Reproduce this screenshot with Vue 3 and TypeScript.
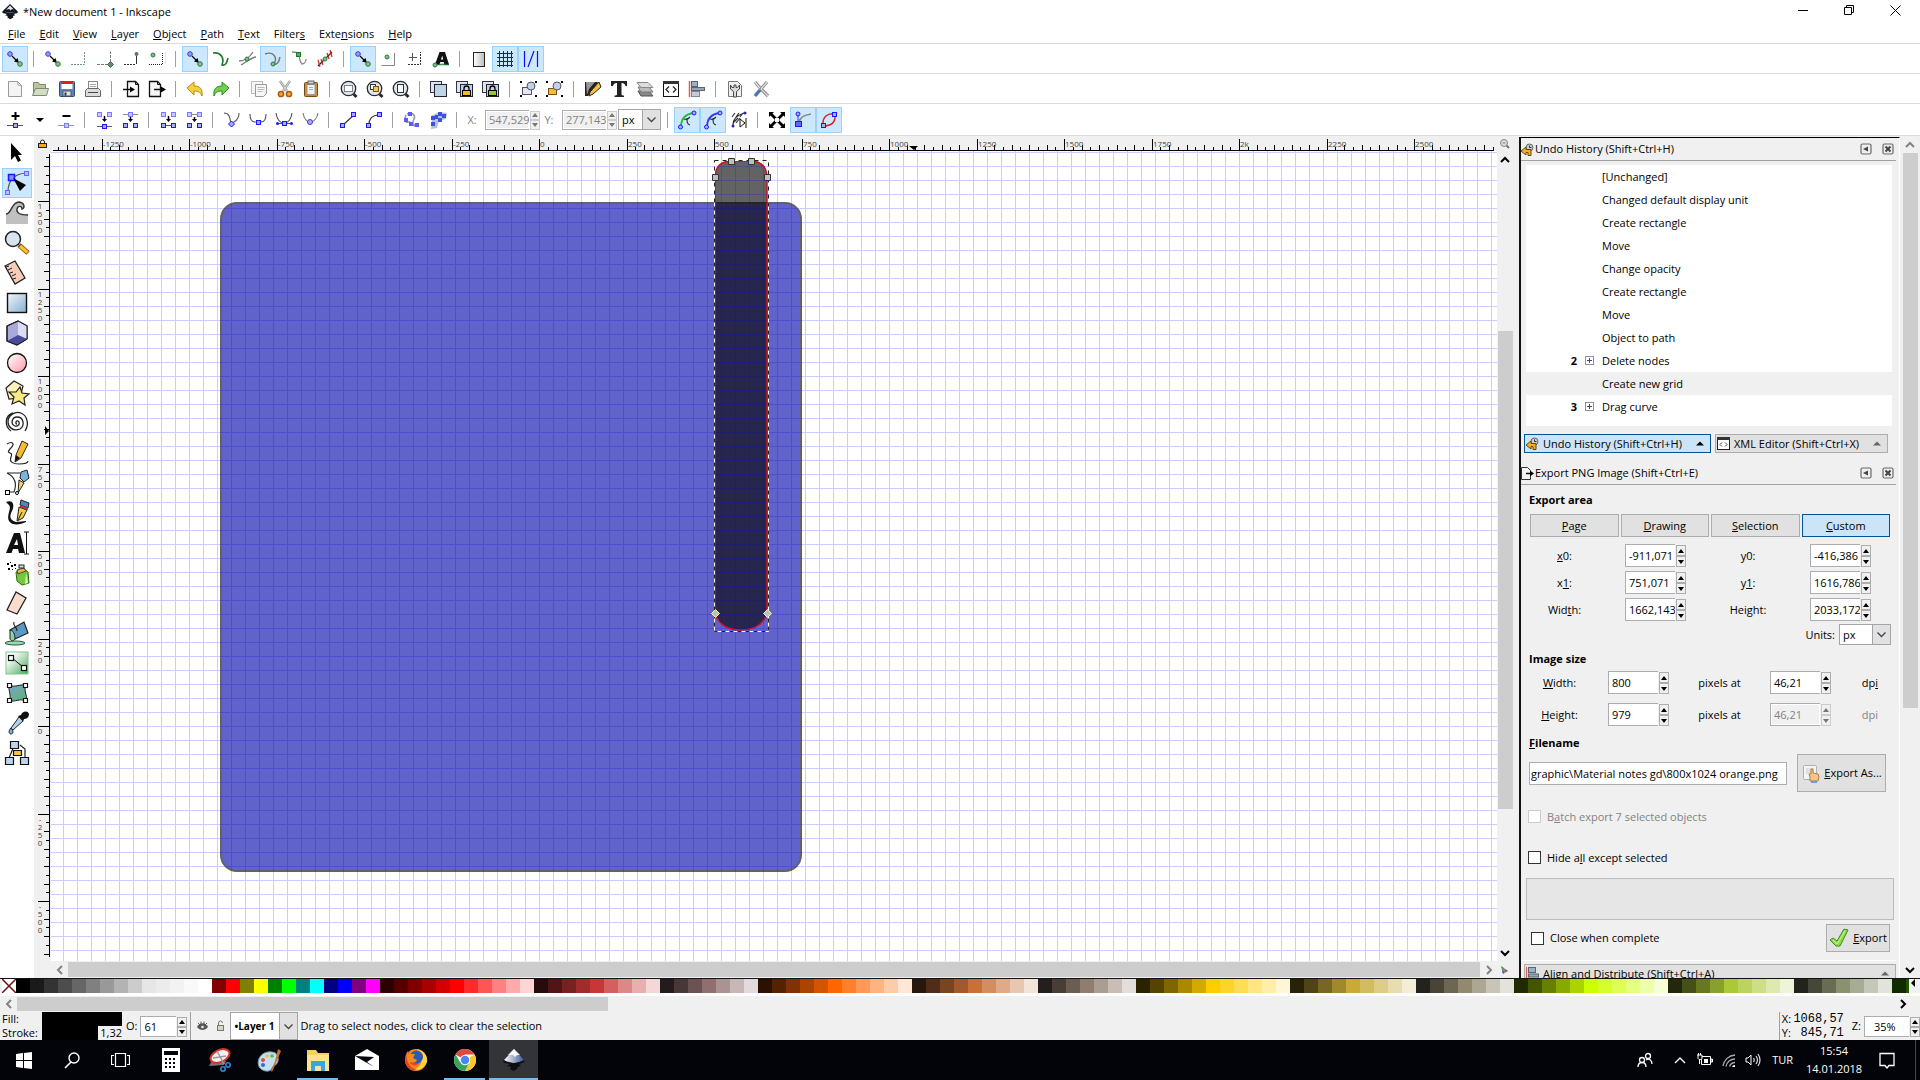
<script setup lang="ts">
import { h, ref } from 'vue'

/* ---------- small building blocks ---------- */

// Label with an underlined access key: the letter after "_" is the mnemonic.
const Key = (p: { t: string }) => {
  const i = p.t.indexOf('_')
  return i < 0 ? [p.t] : [p.t.slice(0, i), h('u', p.t[i + 1]), p.t.slice(i + 2)]
}
Key.props = ['t']

const Icon = (p: { n: string; s?: number }) =>
  h('svg', {
    class: 'icon', width: p.s ?? 24, height: p.s ?? 24,
    viewBox: `0 0 ${p.s ?? 24} ${p.s ?? 24}`, 'aria-hidden': 'true', innerHTML: icons[p.n],
  })
Icon.props = ['n', 's']

const tri = (d: string) => h('svg', { width: 6, height: 4, viewBox: '0 0 6 4' }, [h('path', { d, fill: 'currentColor' })])
const Spin = (p: { id: string; v: string; off?: boolean }) =>
  h('span', { class: ['spin', { off: p.off }] }, [
    h('input', { id: p.id, type: 'text', value: p.v, disabled: p.off }),
    h('span', { class: 'steps' }, [
      h('button', { type: 'button', disabled: p.off, 'aria-label': 'Increase' }, [tri('M0 4h6L3 0z')]),
      h('button', { type: 'button', disabled: p.off, 'aria-label': 'Decrease' }, [tri('M0 0h6L3 4z')]),
    ]),
  ])
Spin.props = { id: String, v: String, off: Boolean }

const chevrons: Record<string, string> = {
  up: 'M1 7l4-4 4 4', down: 'M1 3l4 4 4-4', left: 'M7 1l-4 4 4 4', right: 'M3 1l4 4-4 4',
}
const Arrow = (p: { d: string; dim?: boolean }) =>
  h('button', { type: 'button', class: ['sb-arrow', { dim: p.dim }], 'aria-label': 'Scroll ' + p.d }, [
    h('svg', { width: 10, height: 10, viewBox: '0 0 10 10' }, [
      h('path', { d: chevrons[p.d], fill: 'none', stroke: 'currentColor', 'stroke-width': 2 }),
    ]),
  ])
Arrow.props = { d: String, dim: Boolean }

/* ---------- icons ---------- */

const sq = (x: number, y: number, f = '#aaaaff') =>
  `<rect x="${x - 2}.5" y="${y - 2}.5" width="4" height="4" fill="${f}" stroke="#1a1aff"/>`
const sqLight = (x: number, y: number) =>
  `<rect x="${x - 2}.5" y="${y - 2}.5" width="4" height="4" fill="#c8c8ff" stroke="#7a7aff"/>`
const gdot = (x: number, y: number) => `<circle cx="${x}" cy="${y}" r="2" fill="#7fc08a" stroke="#2c7a3c"/>`
const line = (d: string, c = '#666', w = 1, extra = '') =>
  `<path d="${d}" fill="none" stroke="${c}" stroke-width="${w}" ${extra}/>`
const lens =
  '<circle cx="11.5" cy="11.5" r="7.200" fill="#dfe8f2" stroke="#2a2a2a" stroke-width="1.300"/><path d="M16.500 17l3 3" stroke="#2a2a2a" stroke-width="3"/>'
const padBody = '<rect x="3.500" y="4.500" width="11" height="11" fill="#dce6f0" stroke="#334"/><rect x="7.500" y="7.500" width="12" height="12" fill="#bfd2e6" stroke="#223"/>'
const lock = (c: string) => `<path d="M11 14v-2.500a2.500 2.500 0 015 0V14" fill="none" stroke="#000" stroke-width="1.300"/><rect x="9.500" y="13.500" width="8" height="5" fill="${c}" stroke="#000"/>`
const groupDots = '<path d="M3 4h2v2H3zM18 4h2v2h-2zM3 18h2v2H3zM18 18h2v2h-2z"/>'
const magPaper = '<path d="M6.500 4.500h8l3 3v12h-11z" fill="#f6f6f6" stroke="#111" stroke-width="1.300"/><path d="M14.500 4.500v3h3" fill="none" stroke="#111"/>'
const inkMark =
  '<path d="M8 0L15.500 7.200q1 1.300-.8 2.100l-3 .7 1.600 1.200-2.400.9.500 1.400-3.200 1.700-2.800-1.600.3-1.500-2.600-.8 1.900-1.200-3.700-.9Q-.3 8.400.6 7.200z" fill="#14161c"/><path d="M8 1.500l3.800 4-1.800-.4-1.400 1.300L7.200 5l-2.900.7z" fill="#dfe6f2"/><path d="M3 7.500c3 1.400 7 1.400 10 0-2 2-7 2.500-10 0z" fill="#6a7fae"/>'

const icons: Record<string, string> = {
  snap: line('M9 9l5 5', '#000', 1.3) + '<path d="M16 16l-5-1.500L14.500 11z"/><circle cx="7" cy="7" r="2.300" fill="#9a9aff" stroke="#3a3ad8"/><circle cx="17" cy="17" r="2.300" fill="#7fc08a" stroke="#2c7a3c"/>',
  bbox: line('M4 17.500h13.500V4.500', '#6d9a78', 1, 'stroke-dasharray="2 1"'),
  bboxEdge: line('M4 17.500h13.500V4.500', '#777', 1, 'stroke-dasharray="3 1"') + '<path d="M17.500 14.500l3 3-3 3-3-3z" fill="#678a70" stroke="#465"/>',
  bboxCorner: line('M5 17.500h11', '#333', 1, 'stroke-dasharray="2 1"') + line('M17.500 17V9', '#333') + '<circle cx="17.500" cy="7" r="2" fill="#567a60"/>',
  bboxMid: line('M4 17.500h13.500V5', '#222', 1, 'stroke-dasharray="1 1"') + line('M20.500 5v12', '#ddd', 1, 'stroke-dasharray="2 1"') + gdot(8, 8),
  path: line('M4 6c7-1 12 4 9 12 4 1 5-3 6-7', '#1f7a2c', 1.6),
  inter: line('M4 14c5 0 10-3 14-9M6 18c4-2 9-7 15-8', '#777', 1.3) + gdot(12, 12),
  cusp: line('M4 7c8-3 13 3 9 10 3 1 5-2 6-7', '#777', 1.4) + gdot(12, 17),
  smooth: line('M5 5c3 0 7 0 7 3 1 4 0 6 3 9 2 0 4-2 4-5', '#888', 1.3) + '<rect x="9.500" y="5.500" width="4" height="4" fill="#4caf5a" stroke="#1f7a2c"/>',
  mid: line('M5 19L19 5', '#222', 1.2) + line('M5 13l2 7M8 12l2 6M14 6l2 6M17 3l2 7', '#c22', 1.2) + gdot(12, 12),
  center: line('M4.500 18.500h13V6', '#888') + gdot(10, 10),
  rotc: line('M9.500 6v8M6 10.500h8', '#555') + line('M5 17.500h12.500V5', '#333', 1, 'stroke-dasharray="2 1"'),
  textBase: line('M5 17.500h15', '#3c9a4c', 1.6) + '<path d="M6 17.500L10.500 5h5.500L20 17.500h-4.500l-.8-2.500h-3.400l-.9 2.500zM12 12.500h2.200l-1-4z" fill="#111" fill-rule="evenodd"/>' + gdot(6, 18),
  page: '<defs><linearGradient id="pg"><stop stop-color="#fff"/><stop offset="1" stop-color="#bbb"/></linearGradient></defs><rect x="6.500" y="5.500" width="11" height="14" fill="url(#pg)" stroke="#222"/>',
  grid: line('M4 6.500h16M4 10.500h16M4 14.500h16M4 18.500h16M6.500 4v16M10.500 4v16M14.500 4v16M18.500 4v16', '#1010f0'),
  guide: line('M5.500 4v16M18.500 4v16M15 4L9 20', '#1010f0', 1.2),

  doc: '<path d="M5.500 4.500h9l4 4v11h-13z" fill="#f4f4f2" stroke="#999"/><path d="M14.500 4.500c0 3 0 4 4 4" fill="none" stroke="#999"/>',
  open: '<path d="M4.500 17.500v-12h5l1 2h6v10z" fill="#b9c4a3" stroke="#7d8a6a"/><path d="M3.500 18.500l3-7h13l-2 7z" fill="#d4dcc4" stroke="#7d8a6a"/>',
  save: '<rect x="4.500" y="4.500" width="15" height="15" rx="1" fill="#5a86bd" stroke="#2b4c7a"/><path d="M6 4h12v3H6z" fill="#d8222a"/><path d="M6.500 7h11v5h-11z" fill="#fff"/><path d="M8 14h8v5H8z" fill="#dfe3ea" stroke="#555"/><path d="M9.500 15.500h2v3h-2z" fill="#333"/>',
  print: '<rect x="7.500" y="4.500" width="9" height="8" fill="#fff" stroke="#888"/><path d="M9 7.500h6M9 9.500h6" stroke="#aaa"/><path d="M4.500 19.500v-6l2-2h11l2 2v6z" fill="#dcdcdc" stroke="#666"/><path d="M7 15.500h10" stroke="#444"/>',
  import: '<g transform="translate(2 0)">' + magPaper + '</g><path d="M4 12.500h8" stroke="#111" stroke-width="1.500"/><path d="M16 12.500l-5-3v6z"/>',
  export: '<g transform="translate(-2 0)">' + magPaper + '</g><path d="M9 12.500h8" stroke="#111" stroke-width="1.500"/><path d="M21 12.500l-5-3v6z"/>',
  undo: '<path d="M4 11l7-6v4c6 0 9 3 8 10-1-3-3-5-8-5v4z" fill="#f5cf3c" stroke="#b98a10"/>',
  redo: '<path d="M20 11l-7-6v4c-6 0-9 3-8 10 1-3 3-5 8-5v4z" fill="#6fce4a" stroke="#2f8a1e"/>',
  copy: '<rect x="4.500" y="4.500" width="11" height="12" fill="#f6f6f6" stroke="#bbb"/><path d="M8.500 7.500h11v9l-3 3h-8z" fill="#f6f6f6" stroke="#999"/><path d="M10.500 10.500h7M10.500 12.500h7M10.500 14.500h5" stroke="#bbb"/>',
  cut: line('M7 4l7 10M17 4l-7 10', '#999', 2.4) + line('M7 4l7 10M17 4l-7 10', '#ddd', 1) + '<circle cx="8" cy="17" r="2.600" fill="#f3a63c" stroke="#a85e08" stroke-width="1.500"/><circle cx="16" cy="17" r="2.600" fill="#f3a63c" stroke="#a85e08" stroke-width="1.500"/>',
  paste: '<rect x="5.500" y="5.500" width="13" height="14" rx="1" fill="#c98a3c" stroke="#7a4a10"/><rect x="8" y="7.500" width="8" height="10" fill="#f4f4f4" stroke="#999"/><rect x="9" y="4" width="6" height="3" fill="#ccc" stroke="#666"/><path d="M10 10.500h4M10 12.500h4" stroke="#aaa"/>',
  zsel: lens + '<rect x="7.500" y="8.500" width="8" height="6" fill="#fff" stroke="#111" stroke-dasharray="1 1"/>',
  zdraw: lens + '<rect x="7.500" y="7.500" width="5" height="5" fill="#fff" stroke="#333"/><rect x="10.500" y="9.500" width="5" height="5" fill="#f6c860" stroke="#7a5208"/>',
  zpage: lens + '<rect x="8.500" y="7.500" width="6" height="8" fill="#fff" stroke="#333"/>',
  dup: padBody,
  clone: padBody + lock('#f5b62c'),
  unlink: padBody + lock('#9ac83c'),
  group: groupDots + '<rect x="5.500" y="10.500" width="9" height="7" fill="#dfe8f2" stroke="#555"/><circle cx="14" cy="9" r="4" fill="#c2d2e4" stroke="#556"/>',
  ungroup: groupDots + '<rect x="5.500" y="11.500" width="8" height="6" fill="#f6b93c" stroke="#7a5208"/><circle cx="14" cy="9" r="4" fill="#c2d2e4" stroke="#556"/>',
  fill: '<path d="M4 5h13l-3 6-7 8H4z" fill="#222"/><path d="M5 5h9L8 12l-2 6z" fill="#999"/><path d="M18 5l2 5-8 7-4 2 1-4z" fill="#f5c03c" stroke="#222"/>',
  text: '<path d="M4 4h16v5h-1.500c-.4-2-1.500-3-4-3v11c0 1 .8 1.500 2.500 1.500V20H7.500v-1.500c1.700 0 2.500-.5 2.500-1.500V6C7.500 6 6.400 7 6 9H4z" fill="#222"/>',
  layers: '<path d="M5 14l11 0 4 5H8z" fill="#888" stroke="#555"/><path d="M5 10l11 0 4 5H8z" fill="#bbb" stroke="#777"/><path d="M4 5.500l11 0 5 5H8z" fill="#ddd" stroke="#888"/>',
  xml: '<rect x="4.500" y="4.500" width="15" height="15" fill="#fff" stroke="#111"/><path d="M4 4h16v3H4z" fill="#333"/><path d="M10 9.500L7 12.500l3 3M14 9.500l3 3-3 3" fill="none" stroke="#222" stroke-width="1.200"/>',
  align: '<path d="M4.500 4v16" stroke="#e05a5a" stroke-width="1.500"/><rect x="6.500" y="4.500" width="6" height="5" fill="#9ab0c8" stroke="#567"/><rect x="6.500" y="10.500" width="13" height="3" fill="#9aa4ae" stroke="#567"/><rect x="6.500" y="14.500" width="8" height="5" fill="#c8ccd0" stroke="#789"/>',
  prefDoc: '<path d="M5.500 4.500h9l4 4v11h-13z" fill="#f0f0ee" stroke="#777"/><path d="M7.500 8v4l3 2.500V20h3v-5.500l3-2.500V8l-2 2.500h-1.500V8h-2v2.500H9z" fill="#ddd" stroke="#444"/>',
  prefs: line('M6 5l6 7M18 5l-7 8', '#888', 3) + line('M12 12l7 7', '#888', 3.2) + line('M11 13l-5 6', '#4a76a8', 3.4) + line('M12 12l7 7M6 5l5 6M18 5l-6 7', '#e2e2e2', 1.2),

  addNode: line('M4 17.500h16', '#555') + '<path d="M12.500 4v8M8.500 8h8" stroke="#000" stroke-width="2"/>' + sq(12, 17),
  delNode: line('M4 17.500h16', '#999') + '<path d="M8.500 8h8" stroke="#000" stroke-width="2"/>' + sqLight(12, 17),
  drop: '<path d="M7 10h8l-4 4z"/>',
  join: sqLight(7, 6) + sqLight(17, 6) + '<path d="M12.500 8v3" stroke="#000" stroke-width="1.500"/><path d="M10 11h5l-2.500 3z"/>' + line('M5 18.500h15', '#555') + sq(12, 18),
  break: line('M5 6.500h15', '#888') + sqLight(12, 6) + '<path d="M12.500 9v2" stroke="#000" stroke-width="1.500"/><path d="M10 11h5l-2.500 3z"/>' + sq(7, 17) + sq(17, 17),
  joinSeg: sqLight(7, 6) + sqLight(17, 6) + '<path d="M12.500 8v3" stroke="#000" stroke-width="1.500"/><path d="M10 11h5l-2.500 3z"/>' + line('M7 17.500h10', '#555') + sq(7, 17) + sq(17, 17),
  delSeg: line('M7 6.500h10', '#888') + sqLight(7, 6) + sqLight(17, 6) + '<path d="M12.500 9v2" stroke="#000" stroke-width="1.500"/><path d="M10 11h5l-2.500 3z"/>' + sq(7, 17) + sq(17, 17),
  nCusp: line('M4 5c6 0 6 6 7 11M12 16c1-3 7-2 7-11', '#555', 1.1) + '<path d="M11.500 13l3 3-3 3-3-3z" fill="#aaf" stroke="#1a1aff"/>',
  nSmooth: line('M4 6c0 5 2 8 5 8h6c3 0 5-3 5-8', '#555', 1.1) + sq(12, 14),
  nSym: line('M4 5c1 6 3 10 8 10s7-4 8-10M5 15.500h15', '#555', 1.1) + sq(12, 15) + '<circle cx="5.500" cy="15.500" r="1.500" fill="#1a1aff"/><circle cx="19.500" cy="15.500" r="1.500" fill="#1a1aff"/>',
  nAuto: line('M5 5c1 5 3 9 7 9s7-4 8-9', '#777', 1.1) + '<circle cx="12" cy="14" r="2.500" fill="#aaf" stroke="#3a3ad8"/>',
  segLine: line('M7 17L18 7', '#333', 1.2) + sq(6, 17) + sq(17, 6),
  segCurve: line('M7 17c0-6 3-10 10-10', '#333', 1.2) + sq(6, 17) + sq(17, 6),
  objPath: line('M6 7c-2 5-1 8 2 7 6-1 3 6 10 4M7 6c5-2 9 1 7 5s-2 6 4 6', '#999', 1.6) + '<path d="M4 10h4v4H4zM8 4h4v4H8zM9 14h4v4H9zM15 15h4v4h-4z" fill="#5a5aff"/>',
  strokePath: '<path d="M5 8l8-4 8 1-1 6-7 2-2 7-6 1 1-6z" fill="#b4c0dc"/><path d="M5 8h4v4H5zM12 4h4v4h-4zM16 6h4v4h-4zM12 10h4v4h-4zM5 14h4v4H5zM9 7h3v4H9z" fill="#3f4fe0"/>',
  pathFx: line('M6 19c0-8 4-13 13-14', '#22c03a', 1.8) + line('M9 11c3 1 4 0 6-2M12 10c0 4 0 6 3 7', '#333', 1.2) + '<circle cx="5.500" cy="19" r="2" fill="#aaf" stroke="#1a1aff"/><circle cx="19" cy="5" r="2" fill="#aaf" stroke="#1a1aff"/>',
  pathMask: line('M6 19c0-8 4-13 13-14', '#3a3af0', 1.8) + line('M9 11c3 1 4 0 6-2M12 10c0 4 0 6 3 7', '#333', 1.2) + '<circle cx="5.500" cy="19" r="2" fill="#aaf" stroke="#1a1aff"/><circle cx="19" cy="5" r="2" fill="#aaf" stroke="#1a1aff"/>',
  lpe: line('M6 17c0-6 3-9 11-12M5 9l3-4M9 9l3-4M13 9l3-4M7 14l4-4M9 15l4-5', '#333', 1.2) + '<circle cx="6" cy="18" r="1.500" fill="#22c"/><circle cx="18" cy="5" r="1.500" fill="#22c"/><path d="M13 11l5 4-5 4zM19 10v10" fill="#ffe" stroke="#111"/>',
  transform: '<path d="M4 4h5L7.500 5.500 12 10l4.500-4.500L15 4h5v5l-1.500-1.500L14 12l4.500 4.500L20 15v5h-5l1.500-1.500L12 14l-4.500 4.500L9 20H4v-5l1.500 1.500L10 12 5.500 7.500 4 9z"/><path d="M10 10h4v4h-4z" fill="#fff"/>',
  handles: line('M8 14C9 9 13 7 20 6', '#888', 1.6) + line('M7 7v8', '#33f') + '<circle cx="7" cy="6" r="2" fill="#aaf" stroke="#1a1aff"/><rect x="4.500" y="13.500" width="6" height="5" fill="#66f" stroke="#1a1aff"/>',
  outline: '<path d="M6 18C5 9 10 5 18 6c1 9-4 12-12 12z" fill="none" stroke="#e02020" stroke-width="1.500"/>' + sq(6, 17) + sq(17, 6),

  tSelect: '<path d="M9 5v17l4-4 3 6 3-1.500-3-5.500h4z" fill="#000"/>',
  tNode: line('M6 24C6 12 12 6 24 5', '#555', 1.2) + '<rect x="6.500" y="6.500" width="6" height="6" fill="#88f" stroke="#1a1aff" stroke-width="1.500"/><rect x="22.500" y="3.500" width="4" height="4" fill="#bbf" stroke="#66f"/><rect x="3.500" y="22.500" width="4" height="4" fill="#bbf" stroke="#66f"/><path d="M11 10l13 7-6 6z" fill="#000"/>',
  tTweak: '<path d="M4 16c6 0 5-12 13-12 6 1 6 6 3 7 0-3-4-4-5 0s3 6 11 6v9H4z" fill="#c0c0c0"/><path d="M4 16c6 0 5-12 13-12 6 1 6 6 3 7 0-3-4-4-5 0s3 6 11 6" fill="none" stroke="#333" stroke-width="1.400"/>',
  tZoom: '<path d="M17 17l9 8" stroke="#7a4a08" stroke-width="5"/><path d="M18 18l7.500 6.500" stroke="#f9c030" stroke-width="3.400"/><circle cx="11" cy="11" r="7.500" fill="#d6e4f2" stroke="#222" stroke-width="1.500"/>',
  tMeasure: '<path d="M3 8l10-5 10 17-10 6z" fill="#f6cdb8" stroke="#222" stroke-width="1.300"/><path d="M4 9l3-1M6 12l4-2M8 15l3-1M10 18l4-2M11 21l3-1" stroke="#222"/>',
  tRect: '<defs><linearGradient id="rg" x2="1" y2="1"><stop stop-color="#f2f7fb"/><stop offset="1" stop-color="#86aed2"/></linearGradient></defs><rect x="5.500" y="5.500" width="19" height="19" fill="url(#rg)" stroke="#111" stroke-width="1.400"/>',
  tBox: '<path d="M5 8l11-5 9 5v13l-10 6-10-4z" fill="#a9a9dc" stroke="#222" stroke-width="1.300"/><path d="M16 3l9 5v13l-9-4z" fill="#dcdcf6"/><path d="M5 23l11-6 9 4-10 6z" fill="#4a4a9c"/><path d="M5 8l11-5 9 5v13l-10 6-10-4z" fill="none" stroke="#222"/>',
  tEllipse: '<defs><linearGradient id="eg" x2="1" y2="1"><stop stop-color="#fff"/><stop offset="1" stop-color="#ff9aa8"/></linearGradient></defs><circle cx="15" cy="15" r="9.500" fill="url(#eg)" stroke="#111" stroke-width="1.300"/>',
  tStar: '<path d="M4 10l8-7 9 5-3 12-11 1z" fill="#faf3bc" stroke="#222" stroke-width="1.200"/><path d="M18 9l2 6 7 1-5 4 1 7-6-4-7 3 2-7-5-5 7 0z" fill="#fbea84" stroke="#222" stroke-width="1.200"/>',
  tSpiral: line('M15 16c-2 0-1-4 1-3 3 2 0 6-3 5-5-2-3-9 2-9 7 0 8 9 3 12C10 24 6 18 6 14 6 7 13 3 19 5c7 3 8 12 4 18M9 23C2 18 3 7 11 5', '#222', 1.3),
  tPencil: line('M5 6c5-3 9-1 3 5-5 6 4 2 1 8-2 5 2 7 8 7 5 0 9-1 9-3', '#222', 1.2) + '<path d="M20 3l6 3-7 14-6 4 1-7z" fill="#fabc2c" stroke="#222"/><path d="M14 17l4 3-5 4z" fill="#111"/>',
  tPen: line('M5 5h13M5 5c8 4 10 11 7 19H6', '#222', 1.1) + '<path d="M19 4l6-2 2 8-5 4-4-4z" fill="#7ab4d8" stroke="#223"/><path d="M17 12l5 3-6 10z" fill="#f6d06c" stroke="#222"/><rect x="3.500" y="22.500" width="4" height="4" fill="#fff" stroke="#000"/><circle cx="15" cy="25" r="1.500" fill="#fff" stroke="#000"/>',
  tCallig: '<path d="M4 4c7-3 9 3 6 9s-2 9 4 11l10-1v1c-6 3-14 4-17-1-3-6 3-12 0-16z" fill="#111"/><path d="M19 2l8 3-1 5-8-3z" fill="#4a8ac0" stroke="#222"/><path d="M18 7l8 3v2l-8-3z" fill="#d03030"/><path d="M17 9l8 3-4 8-6 3z" fill="#f4c848" stroke="#222"/><path d="M16 22l4-8" stroke="#222"/>',
  tText: '<path d="M4 25L12 5h6l5 20h-6l-1-4h-5l-1.500 4zM12 17h4l-1-6z" fill="#111" fill-rule="evenodd"/><path d="M22 4h5M22 26h5M24.500 4v22" stroke="#111" fill="none"/>',
  tSpray: '<path d="M14 14l8-3 4 3 1 11-7 2-5-4z" fill="#74c83c" stroke="#2a6a10"/><path d="M24 15l2 10-3 1z" fill="#d8f6b4"/><path d="M15 12l7-2 2 3-8 3z" fill="#e8b83c" stroke="#444"/><rect x="17" y="7" width="5" height="3" fill="#ddd" stroke="#222"/><path d="M5 5h2v2H5zM9 7h2v2H9zM6 10h2v2H6zM12 6h2v2h-2zM13 10h1v1h-1zM10 11h1v1h-1zM8 4h1v1H8z"/>',
  tEraser: '<path d="M5 22L14 4l10 6-9 16z" fill="#f9dccb" stroke="#222" stroke-width="1.300"/>',
  tBucket: '<ellipse cx="13" cy="25" rx="10" ry="2" fill="#9adbb0" stroke="#2a5a3a"/><path d="M8 12l14-8 4 11-13 6z" fill="#5c98c4" stroke="#222" stroke-width="1.200"/><path d="M8 12c3 0 5 4 5 9-2 3-5 2-5-1z" fill="#8cd0a4" stroke="#222"/>' + line('M12 4c-2 4 3 4 3 9', '#222', 1.2),
  tGrad: '<defs><linearGradient id="gg" x2="1" y2="1"><stop offset=".2" stop-color="#fff"/><stop offset="1" stop-color="#4aa85c"/></linearGradient></defs><rect x="4" y="4" width="22" height="22" fill="url(#gg)" stroke="#7cc88a"/>' + line('M10 10l11 9', '#111') + '<rect x="6.500" y="7.500" width="5" height="5" fill="#fff" stroke="#111" stroke-width="1.200"/><rect x="19.500" y="17.500" width="5" height="5" fill="#fff" stroke="#111" stroke-width="1.200"/>',
  tMesh: '<defs><linearGradient id="mg" x2="1" y2="1"><stop stop-color="#7aa4d0"/><stop offset="1" stop-color="#5cb46c"/></linearGradient></defs><path d="M7 7c6 3 10-1 17 0-3 6 2 10 0 16-6-3-10 1-17 0 3-6-1-10 0-16z" fill="url(#mg)" stroke="#222"/><path d="M5.500 5.500h4v4h-4zM21.500 5.500h4v4h-4zM5.500 20.500h4v4h-4zM21.500 20.500h4v4h-4z" fill="#fff" stroke="#111" stroke-width="1.200"/>',
  tDrop: '<path d="M16 8l3-1c1-4 7-5 8-1 0 4-3 5-5 5l-1 3z" fill="#111"/><path d="M17 9l4 4-10 9-2-2z" fill="#b4cfe8" stroke="#222"/><path d="M9 20c3 3 2 6 0 6s-3-3 0-6z" fill="#7ab0d8" stroke="#223"/>',
  tConn: line('M12 8l-5 12M18 7l5 4v9', '#222', 1.2) + '<path d="M8.500 3.500h8v7h-8zM3.500 19.500h8v7h-8zM18.500 19.500h8v7h-8z" fill="#bcd4f0" stroke="#111" stroke-width="1.200"/><path d="M11.500 12.500h8v5h-8z" fill="#f8c83c" stroke="#111" stroke-width="1.200"/>',

  history: '<circle cx="8.500" cy="4.500" r="3.500" fill="#c4ccd4" stroke="#666"/><path d="M8.500 2.500v2h2" fill="none" stroke="#333"/><path d="M0 8l5-4v2.500h5V12.500H7V9.500H5V12z" fill="#f4b01c" stroke="#6a4408"/>',
  xmlS: '<rect x=".5" y=".5" width="12" height="12" fill="#fff" stroke="#222"/><path d="M0 0h13v3H0z" fill="#333"/><path d="M5 5.500L3 7.500l2 2M8 5.500l2 2-2 2" fill="none" stroke="#444"/>',
  exportS: '<path d="M.5.500h6l3 3v9h-9z" fill="#f6f6f6" stroke="#333"/><path d="M5 6.500h5" stroke="#111" stroke-width="1.500"/><path d="M13 6.500L9 3.500v6z"/>',
  alignS: '<path d="M.5 0v13" stroke="#e05a5a"/><rect x="2.500" y=".5" width="7" height="5" fill="#9ab0c8" stroke="#567"/><rect x="2.500" y="7" width="10" height="3" fill="#9aa4ae" stroke="#567"/>',
  check: '<path d="M1 12l3-2 4 3L15 1l4 1-8 16H7z" fill="#8cdc4c" stroke="#3f8a1a"/><path d="M4 12l4 4L16 3" fill="none" stroke="#c8f49c"/>',
  hand: '<rect x="2.500" y="2.500" width="13" height="14" rx="1" fill="#f4f4f2" stroke="#b0b0b0"/><path d="M5 6h8M5 8h8M5 10h8" stroke="#ccc"/><path d="M9 18v-4l-1-3h2V6h2v4l5 1 1 3-1 4z" fill="#f4c48c" stroke="#b0803c"/><path d="M10 18h6v2h-6z" fill="#6aa0dc"/>',
  detach: '<rect x="1" y="1" width="10" height="10" rx="1.500" fill="#eee" stroke="#6a6a6a" stroke-width="1.200"/><path d="M3 6l5-2.500v5z" fill="#444"/>',
  close: '<rect x="1" y="1" width="10" height="10" rx="1.500" fill="#eee" stroke="#6a6a6a" stroke-width="1.200"/><path d="M3.500 3.500l5 5M8.500 3.500l-5 5" stroke="#444" stroke-width="2"/>',
  padlock: '<path d="M2.500 4.500V3a2 2 0 014 0v1.500" fill="none" stroke="#222"/><rect x=".5" y="4.500" width="8" height="4" fill="#f0a81c" stroke="#222"/>',
  zoomS: '<circle cx="4" cy="4" r="3.500" fill="#ddd" stroke="#888"/><path d="M6.500 6.500l2.500 2.500" stroke="#777" stroke-width="2"/><path d="M2.500 4h3" stroke="#888"/>',
  cms: '<path d="M1 1l7 5-5 3z" fill="#888"/><path d="M1 1l3 2-1 2z" fill="#3a3"/><path d="M5 4l3 2-3 1z" fill="#c44"/><path d="M2 5l2 2-1 2z" fill="#44c"/>',
  eye: '<path d="M1 7c3-5 8-5 11 0-3 4-8 4-11 0z" fill="#555"/><path d="M2 3l2 2M5 1.500v3M8 1.500v3M11 3L9 5" stroke="#555"/><circle cx="6.500" cy="7" r="1.300" fill="#eee"/>',
  unlock: '<path d="M3.500 5V3a2 2 0 014 0" fill="none" stroke="#777"/><rect x="2.500" y="5.500" width="6" height="5" fill="#ddd6b8" stroke="#777"/>',

  win: '<path d="M0 2l7-1v7H0zM8 .9L16 0v8H8zM0 9h7v7l-7-1zM8 9h8v8l-8-1z" fill="#fff"/>',
  search: '<circle cx="10" cy="6" r="5" fill="none" stroke="#fff" stroke-width="1.400"/><path d="M7 10l-6 6" stroke="#fff" stroke-width="1.600"/>',
  tasks: '<path d="M4.500 2.500h10v13h-10zM3 4.500H.5v9H3M16 4.500h2.500v9H16" fill="none" stroke="#fff" stroke-width="1.200"/>',
  calc: '<path d="M3 0h18v24H3z" fill="#fff"/><path d="M5 3h14v4H5z" fill="#02040a"/><path d="M6 10h2v2H6zM10 10h2v2h-2zM14 10h2v2h-2zM6 14h2v2H6zM10 14h2v2h-2zM14 14h2v2h-2zM6 18h2v2H6zM10 18h2v2h-2zM14 18h2v2h-2z" fill="#02040a"/>',
  snip: '<path d="M1 18l3-5 14 0-2 4z" fill="#777"/><ellipse cx="12" cy="8" rx="10" ry="6" transform="rotate(-25 12 8)" fill="#f2f2f2" stroke="#d8322c" stroke-width="2"/><path d="M9 3l7 13M5 10l13-2" stroke="#999" stroke-width="1.500"/><circle cx="15" cy="21" r="2.200" fill="none" stroke="#2a8ae0" stroke-width="1.600"/><circle cx="20" cy="17" r="2.200" fill="none" stroke="#2a8ae0" stroke-width="1.600"/>',
  paint: '<path d="M11 4c8-1 11 3 10 9-1 5-5 4-6 7-1 4-7 4-11 1-6-5-2-16 7-17z" fill="#c4e0f0" stroke="#6a94b0"/><circle cx="6" cy="12" r="2" fill="#e04a3c"/><circle cx="10" cy="8" r="1.800" fill="#f0c030"/><circle cx="15" cy="8" r="1.800" fill="#5ab84a"/><circle cx="6" cy="17" r="2" fill="#3a6ac8"/><path d="M21 1l3 2-5 12-4 9-1-1 4-10z" fill="#c8742c"/>',
  files: '<path d="M1 2h9l2 3h11v18H1z" fill="#f4cf62"/><path d="M1 7h22v16H1z" fill="#fbe392"/><path d="M5 13h14v10h-4v-5H9v5H5z" fill="#3ca4e0"/>',
  mail: '<path d="M0 8l12-7 12 7v14H0z" fill="#fff"/><path d="M0 8l19 1-7 5 7 5z" fill="#02040a"/>',
  fox: '<circle cx="12" cy="12" r="11" fill="#f5821c"/><path d="M13 1c8 2 11 8 10 13-4 8-10 9-15 8 9-2 13-9 5-21z" fill="#ffd43c"/><path d="M1 12C1 7 3 4 4 3l2 3 4 0c-2 4 4 7 7 5-1 6-6 8-10 5-3 2 4 6 7 6C6 24 1 18 1 12z" fill="#e8442c"/><circle cx="12.500" cy="9" r="6.500" fill="#2a5ab8"/><path d="M3 4l3 2 5 0-2 4 4 2c-1 3-4 3-7 2 0 2 2 5 6 5-6 2-11-7-9-15z" fill="#f58a1c"/>',
  chrome: '<circle cx="12" cy="12" r="11" fill="#fff"/><path d="M12 12L2.500 6.500A11 11 0 0121.500 6.500H12z" fill="#e2483c"/><path d="M12 12l9.500-5.500A11 11 0 0112 23l5-8.500z" fill="#fbc82c"/><path d="M2.500 6.500A11 11 0 0012 23l4.500-8.500L7 14z" fill="#36a45a"/><circle cx="12" cy="12" r="5.200" fill="#fff"/><circle cx="12" cy="12" r="4.200" fill="#4a86ee"/>',
  ink: '<defs><linearGradient id="ik"><stop stop-color="#fff"/><stop offset="1" stop-color="#3a5a94"/></linearGradient></defs><path d="M12 1l10 11q1 2-2 3l-3 1 2 2-4 1 1 1-4 3-4-2 1-2-4-1 3-2-5-1q-3-1-1-3z" fill="#0c0e14"/><path d="M12 1l10 11q-5 3-10 3T2 12z" fill="url(#ik)"/><path d="M12 1l6 6-3 0-2 2-2-2-5 0z" fill="#f4f6fa"/><path d="M6 13c4 3 9 3 13 0-2 4-11 4-13 0z" fill="#111"/>',
  inkS: inkMark,
  people: '<circle cx="5" cy="8" r="2.500" fill="none" stroke="#fff" stroke-width="1.300"/><path d="M1 15c0-6 8-6 8 0" fill="none" stroke="#fff" stroke-width="1.300"/><circle cx="11" cy="4" r="2.500" fill="none" stroke="#fff" stroke-width="1.300"/><path d="M9 8c3-2 6 0 6 4" fill="none" stroke="#fff" stroke-width="1.300"/>',
  chev: '<path d="M3 11l5-5 5 5" fill="none" stroke="#fff" stroke-width="1.400"/>',
  batt: '<path d="M5.500 4.500h9v8h-9zM15 7h1.500v3H15z" fill="none" stroke="#fff"/><path d="M8 7h4v4H8z" fill="#fff"/><path d="M1 3h5v3c0 2-4 2-4 0V3M3.500 7v5M2.500 1v2M4.500 1v2" stroke="#fff" fill="#02040a"/>',
  wifi: '<path d="M2 14A13 13 0 0114 3M5 14.500A9 9 0 0114 7M8.500 14.500A6 6 0 0114 10.500" fill="none" stroke="#aaa" stroke-width="1.300"/><path d="M11 15a3 3 0 013-2v2z" fill="#fff"/>',
  vol: '<path d="M1 6h2l3-3v10L3 10H1z" fill="none" stroke="#fff"/><path d="M8.500 6q1.500 2 0 4M11 4q3 4 0 8M13 2q4 6 0 12" fill="none" stroke="#ddd" stroke-width="1.200"/>',
  note: '<path d="M1 1.500h14v12h-5L8 16l-2-2.500H1z" fill="none" stroke="#fff" stroke-width="1.300"/>',
}

/* ---------- menus and toolbars ---------- */

const menus = ['_File', '_Edit', '_View', '_Layer', '_Object', '_Path', '_Text', 'Filter_s', 'Exte_nsions', '_Help']

// "|" is a separator, a trailing "!" marks a pressed toggle.
const bar = (s: string) => s.split(' ').map((t) => ({ n: t.replace('!', ''), on: t.endsWith('!') }))
const snapBar = bar('snap! | snap bbox bboxEdge bboxCorner bboxMid | snap! path inter cusp! smooth mid | snap! center rotc textBase | page grid! guide!')
const mainBar = bar('doc open save print | import export | undo redo | copy cut paste | zsel zdraw zpage | dup clone unlink | group ungroup | fill text layers xml align | prefDoc prefs')
const nodeBar = bar('addNode drop delNode | join break | joinSeg delSeg | nCusp nSmooth nSym nAuto | segLine segCurve | objPath strokePath |')
const nodeBar2 = bar('| pathFx! pathMask! lpe | transform handles! outline!')
const tools = bar('tSelect tNode! tTweak tZoom tMeasure tRect tBox tEllipse tStar tSpiral tPencil tPen tCallig tText tSpray tEraser tBucket tGrad tMesh tDrop tConn')

/* ---------- rulers: 0.35 px per unit, a tick every 25 units ---------- */

const SCALE = 0.35
const X0 = 488
const Y0 = 575
const tickLen = (u: number) => (u % 250 === 0 ? 11 : u % 50 === 0 ? 5 : 3)
const hTicks = Array.from({ length: 260 }, (_, i) => (i - 55) * 25)
  .map((u) => ({ u, p: Math.round(X0 + u * SCALE), len: tickLen(u) }))
  .filter((t) => t.p < 1443)
const vTicks = Array.from({ length: 120 }, (_, i) => (i - 50) * 25)
  .map((u) => ({ u, p: Math.round(Y0 - u * SCALE), len: tickLen(u) }))
  .filter((t) => t.p > 2 && t.p < 807)
const hMajor = hTicks.filter((t) => t.u % 250 === 0)
const vMajor = vTicks.filter((t) => t.u % 250 === 0)
const hLabel = (u: number) => (u === 2000 ? '2k' : String(u))

/* ---------- undo history and export dialog ---------- */

const history = [
  { t: '[Unchanged]' }, { t: 'Changed default display unit' }, { t: 'Create rectangle' }, { t: 'Move' },
  { t: 'Change opacity' }, { t: 'Create rectangle' }, { t: 'Move' }, { t: 'Object to path' },
  { t: 'Delete nodes', n: 2 }, { t: 'Create new grid', sel: true }, { t: 'Drag curve', n: 3 },
] as { t: string; n?: number; sel?: boolean }[]

const areas = ['_Page', '_Drawing', '_Selection', '_Custom']
const area = ref('_Custom')
const coords = [
  { id: 'x0', l: '_x0:', v: '-911,071' }, { id: 'y0', l: 'y0:', v: '-416,386' },
  { id: 'x1', l: 'x_1:', v: '751,071' }, { id: 'y1', l: 'y_1:', v: '1616,786' },
  { id: 'aw', l: 'Wid_th:', v: '1662,143' }, { id: 'ah', l: 'Height:', v: '2033,172' },
]
const sizes = [
  { id: 'iw', l: '_Width:', v: '800', dpi: '46,21', d: 'dp_i', off: false },
  { id: 'ih', l: '_Height:', v: '979', dpi: '46,21', d: 'dpi', off: true },
]

/* ---------- palette ---------- */

const palette = (
  '000000 1a1a1a 333333 4d4d4d 666666 808080 999999 b3b3b3 cccccc e6e6e6 ececec f2f2f2 f9f9f9 ffffff ' +
  '800000 ff0000 808000 ffff00 008000 00ff00 008080 00ffff 000080 0000ff 800080 ff00ff ' +
  '2b0000 550000 800000 aa0000 d40000 ff0000 ff2a2a ff5555 ff8080 ffaaaa ffd5d5 ' +
  '280b0b 501616 782121 a02c2c c83737 d35f5f de8787 e9afaf f4d7d7 241c1c 483737 6c5353 916f6f ac9393 c8b7b7 e3dbdb ' +
  '2b1100 552200 803300 aa4400 d45500 ff6600 ff7f2a ff9955 ffb380 ffccaa ffe6d5 ' +
  '28170b 502d16 784421 a05a2c c87137 d38d5f deaa87 e9c6af f4e3d7 241f1c 483e37 6c5d53 917c6f ac9d93 c8beb7 e3dedb ' +
  '2b2200 554400 806600 aa8800 d4aa00 ffcc00 ffd42a ffdd55 ffe680 ffeeaa fff6d5 ' +
  '28220b 504416 786721 a0892c c8ab37 d3bc5f decd87 e9ddaf f4eed7 24221c 484537 6c6753 918a6f aca793 c8c4b7 e3e2db ' +
  '222b00 445500 668000 88aa00 aad400 ccff00 d4ff2a ddff55 e5ff80 eeffaa f6ffd5 ' +
  '23280b 445016 677821 89a02c abc837 bcd35f cdde87 dde9af eef4d7 22241c 454837 676c53 8a916f a7ac93 c4c8b7 e2e3db ' +
  '112b00 225500'
).split(' ')

const apps = [
  { n: 'calc' }, { n: 'snip' }, { n: 'paint' }, { n: 'files', run: true },
  { n: 'mail' }, { n: 'fox' }, { n: 'chrome', run: true }, { n: 'ink', active: true },
] as { n: string; run?: boolean; active?: boolean }[]
</script>

<template>
  <div class="app">
    <header class="titlebar">
      <Icon n="inkS" :s="16" />
      <h1>*New document 1 - Inkscape</h1>
      <div class="winbtns">
        <button type="button" aria-label="Minimize"><svg width="11" height="11"><path d="M0 5.500h10" stroke="#000" /></svg></button>
        <button type="button" aria-label="Restore"><svg width="11" height="11"><path d="M.5 2.500h7v7h-7zM2.500 2V.5h7v7H8" fill="none" stroke="#000" /></svg></button>
        <button type="button" aria-label="Close window"><svg width="11" height="11"><path d="M.5.5l10 10M10.500.5l-10 10" stroke="#000" /></svg></button>
      </div>
    </header>

    <nav class="menubar">
      <button v-for="m in menus" :key="m" type="button"><Key :t="m" /></button>
    </nav>

    <div class="toolbar">
      <template v-for="(b, i) in snapBar" :key="i">
        <i v-if="b.n === '|'" class="sep"></i>
        <button v-else type="button" class="tb" :class="{ on: b.on }" :aria-label="b.n"><Icon :n="b.n" /></button>
      </template>
    </div>
    <div class="toolbar">
      <template v-for="(b, i) in mainBar" :key="i">
        <i v-if="b.n === '|'" class="sep"></i>
        <button v-else type="button" class="tb" :aria-label="b.n"><Icon :n="b.n" /></button>
      </template>
    </div>
    <div class="toolbar node">
      <template v-for="(b, i) in nodeBar" :key="i">
        <i v-if="b.n === '|'" class="sep"></i>
        <button v-else type="button" class="tb" :class="b.n" :aria-label="b.n"><Icon :n="b.n" /></button>
      </template>
      <div class="xy">
        <label for="nx">X:</label><Spin id="nx" v="547,529" off />
        <label for="ny">Y:</label><Spin id="ny" v="277,143" off />
        <span class="combo unit">
          <select aria-label="Unit"><option>px</option></select>
          <svg width="17" height="19"><path d="M4.500 7.500l4 4 4-4" fill="none" stroke="#444" stroke-width="1.300" /></svg>
        </span>
      </div>
      <template v-for="(b, i) in nodeBar2" :key="'r' + i">
        <i v-if="b.n === '|'" class="sep"></i>
        <button v-else type="button" class="tb" :class="{ on: b.on }" :aria-label="b.n"><Icon :n="b.n" /></button>
      </template>
    </div>

    <main class="work">
      <div class="toolbox">
        <button v-for="t in tools" :key="t.n" type="button" :class="{ on: t.on }" :aria-label="t.n"><Icon :n="t.n" :s="30" /></button>
      </div>

      <div class="view">
        <div class="corner"><Icon n="padlock" :s="9" /></div>
        <svg class="hruler" width="100%" height="15">
          <rect x="2" y="14" width="1441" height="1" />
          <rect v-for="t in hTicks" :key="t.u" :x="t.p" :y="14 - t.len" width="1" :height="t.len" />
          <text v-for="t in hMajor" :key="'l' + t.u" :x="t.p + 1" y="11">{{ hLabel(t.u) }}</text>
          <path d="M858 10h9l-4 4z" />
        </svg>
        <div class="corner"><Icon n="zoomS" :s="10" /></div>

        <svg class="vruler" width="17" height="100%">
          <rect x="15" y="3" width="1" height="803" />
          <rect v-for="t in vTicks" :key="t.u" :x="15 - t.len" :y="t.p" :width="t.len" height="1" />
          <template v-for="t in vMajor" :key="'l' + t.u">
            <text v-for="(c, i) in String(t.u).split('')" :key="i" x="6" :y="t.p + 8 + i * 8" text-anchor="middle">{{ c }}</text>
          </template>
          <path d="M11 275v9l4-4z" />
        </svg>

        <svg class="canvas" width="100%" height="100%">
          <defs>
            <pattern id="cells" x="12" y="1" width="14" height="14" patternUnits="userSpaceOnUse">
              <path d="M0 0h14v1H1v13H0z" fill="#0000ff" fill-opacity=".2" />
            </pattern>
          </defs>
          <rect x="170" y="52" width="580" height="668" rx="16" fill="#6262cb" stroke="#62626a" stroke-width="2" />
          <path d="M664 27q0-17 17-17h18q17 0 17 17v436q-6 16-26 16t-26-16z" fill="#000" fill-opacity=".61" />
          <rect width="100%" height="100%" fill="url(#cells)" />
          <path d="M664 27q0-17 17-17h18q17 0 17 17v436q-6 16-26 16t-26-16z" fill="none" stroke="#c41424" stroke-width="1.500" />
          <path d="M663.500 9.500h54v471h-54z" fill="none" stroke="#fff" />
          <path d="M663.500 9.500h54v471h-54z" fill="none" stroke="#222" stroke-dasharray="4 4" />
          <path d="M677.500 7.500h6v6h-6zM697.500 7.500h6v6h-6zM661.500 23.500h6v6h-6zM713.500 23.500h6v6h-6z" fill="#bfbfbf" stroke="#333" />
          <path d="M664.500 458.500l4 4-4 4-4-4zM716.500 458.500l4 4-4 4-4-4z" fill="#bfbfbf" stroke="#f2f2c0" />
        </svg>

        <div class="vscroll">
          <Arrow d="up" /><i class="g163"></i><i class="thumb g478"></i><i class="g135"></i><Arrow d="down" />
        </div>
        <div class="corner"></div>
        <div class="hscroll"><Arrow d="left" dim /><i class="thumb g478"></i><Arrow d="right" dim /></div>
        <div class="corner"><Icon n="cms" :s="10" /></div>
      </div>

      <aside class="dock">
        <div class="dhead">
          <Icon n="history" :s="13" /><h2>Undo History (Shift+Ctrl+H)</h2>
          <button type="button" aria-label="Iconify"><Icon n="detach" :s="12" /></button>
          <button type="button" aria-label="Close"><Icon n="close" :s="12" /></button>
        </div>
        <ul class="history">
          <li v-for="(r, i) in history" :key="i" :class="{ sel: r.sel }">
            <b>{{ r.n }}</b>
            <svg width="9" height="9"><template v-if="r.n"><rect x=".5" y=".5" width="8" height="8" fill="#fff" stroke="#919191" /><path d="M2 4.500h5M4.500 2v5" stroke="#2a4a9c" /></template></svg>
            <span>{{ r.t }}</span>
          </li>
        </ul>
        <div class="tabs">
          <button type="button" class="on"><Icon n="history" :s="13" />Undo History (Shift+Ctrl+H)<svg width="8" height="5"><path d="M0 4.500h8l-4-4z" /></svg></button>
          <button type="button"><Icon n="xmlS" :s="13" />XML Editor (Shift+Ctrl+X)<svg width="8" height="5"><path d="M0 4.500h8l-4-4z" fill="#666" /></svg></button>
        </div>
        <div class="dhead">
          <Icon n="exportS" :s="13" /><h2>Export PNG Image (Shift+Ctrl+E)</h2>
          <button type="button" aria-label="Iconify"><Icon n="detach" :s="12" /></button>
          <button type="button" aria-label="Close"><Icon n="close" :s="12" /></button>
        </div>
        <form class="export" @submit.prevent>
          <h3>Export area</h3>
          <div class="areas">
            <button v-for="a in areas" :key="a" type="button" :class="{ on: area === a }" @click="area = a"><Key :t="a" /></button>
          </div>
          <div class="coords">
            <template v-for="c in coords" :key="c.id">
              <label :for="c.id"><Key :t="c.l" /></label><Spin :id="c.id" :v="c.v" />
            </template>
          </div>
          <div class="units">
            <label for="un">Units:</label>
            <span class="combo">
              <select id="un"><option>px</option></select>
              <svg width="17" height="19"><path d="M4.500 7.500l4 4 4-4" fill="none" stroke="#444" stroke-width="1.300" /></svg>
            </span>
          </div>
          <h3>Image size</h3>
          <div v-for="s in sizes" :key="s.id" class="size">
            <label :for="s.id"><Key :t="s.l" /></label><Spin :id="s.id" :v="s.v" />
            <span>pixels at</span><Spin :id="s.id + 'd'" :v="s.dpi" :off="s.off" />
            <label class="dpi" :class="{ dim: s.off }" :for="s.id + 'd'"><Key :t="s.d" /></label>
          </div>
          <h3><label for="fn"><Key t="_Filename" /></label></h3>
          <div class="file">
            <input id="fn" type="text" value="graphic\Material notes gd\800x1024 orange.png" />
            <button type="button"><Icon n="hand" :s="20" /><span><Key t="_Export As..." /></span></button>
          </div>
          <label class="tick dim"><input type="checkbox" disabled /><span><Key t="B_atch export 7 selected objects" /></span></label>
          <label class="tick"><input type="checkbox" /><span><Key t="Hide a_ll except selected" /></span></label>
          <div class="progress"></div>
          <div class="finish">
            <label class="tick"><input type="checkbox" /><span>Close when complete</span></label>
            <button type="submit"><Icon n="check" :s="20" /><span><Key t="_Export" /></span></button>
          </div>
        </form>
        <div class="tabs last">
          <button type="button"><Icon n="alignS" :s="13" />Align and Distribute (Shift+Ctrl+A)<svg width="8" height="5"><path d="M0 4.500h8l-4-4z" fill="#666" /></svg></button>
        </div>
      </aside>
      <div class="dscroll"><Arrow d="up" dim /><i class="thumb g555"></i><i class="g253"></i><Arrow d="down" /></div>
    </main>

    <div class="palette">
      <div class="swatches">
        <button type="button" class="none" aria-label="None"><svg width="14" height="14"><path d="M0 0l14 14M14 0L0 14" stroke="#6a1010" stroke-width="1.500" /></svg></button>
        <button v-for="(c, i) in palette" :key="i" type="button" :style="{ background: '#' + c }" :aria-label="'#' + c"></button>
      </div>
      <svg width="6" height="10"><path d="M5 0v8L1 4z" /></svg>
    </div>
    <div class="pscroll"><Arrow d="left" dim /><i class="thumb g591"></i><i class="g1286"></i><Arrow d="right" /></div>

    <footer class="status">
      <div class="fs"><span>Fill:</span><i class="black"></i><span>Stroke:</span><i class="black"><em>1,32</em></i></div>
      <label for="op" class="op">O:</label><Spin id="op" v="61" />
      <i class="vline"></i>
      <Icon n="eye" :s="13" /><Icon n="unlock" :s="12" />
      <span class="combo layer">
        <select aria-label="Layer"><option>•Layer 1</option></select>
        <svg width="17" height="26"><path d="M4.500 11.500l4 4 4-4" fill="none" stroke="#444" stroke-width="1.300" /></svg>
      </span>
      <p>Drag to select nodes, click to clear the selection</p>
      <dl class="pos"><dt>X:</dt><dd>1068,57</dd><dt>Y:</dt><dd>845,71</dd></dl>
      <label for="zm" class="zl">Z:</label><Spin id="zm" class="zoom" v="35%" />
    </footer>

    <footer class="taskbar">
      <button type="button" aria-label="Start"><Icon n="win" :s="17" /></button>
      <button type="button" aria-label="Search"><Icon n="search" :s="17" /></button>
      <button type="button" aria-label="Task view"><Icon n="tasks" :s="19" /></button>
      <div class="apps">
        <button v-for="a in apps" :key="a.n" type="button" :class="{ run: a.run, active: a.active }" :aria-label="a.n"><Icon :n="a.n" /></button>
      </div>
      <div class="tray">
        <Icon n="people" :s="16" class="ppl" /><Icon n="chev" :s="16" /><Icon n="batt" :s="17" /><Icon n="wifi" :s="16" /><Icon n="vol" :s="17" />
        <span class="lang">TUR</span>
        <time>15:54<br />14.01.2018</time>
        <Icon n="note" :s="17" />
        <i class="desk"></i>
      </div>
    </footer>
  </div>
</template>

<style>
body { margin: 0; overflow: hidden; }
.icon { display: block; flex: none; }
.spin { display: flex; height: 23px; width: 61px; color: #000; }
.spin input {
  box-sizing: border-box; width: 50px; flex: 1; min-width: 0; height: 100%; border: 1px solid #abadb3;
  border-right: 0; padding: 0 0 0 3px; background: #fff; font: inherit; color: inherit; border-radius: 0;
}
.spin .steps { display: flex; flex-direction: column; width: 10px; margin: 1px 0 0 1px; flex: none; }
.spin .steps button {
  flex: 1; display: flex; align-items: center; justify-content: center; padding: 0; min-height: 0;
  border: 1px solid #adadad; background: #f0f0f0; color: #000;
}
.spin.off input { background: #f0f0f0; color: #838383; box-shadow: inset 0 0 0 1px #fff; }
.spin.off .steps button { color: #777; border-color: #ccc; }
.sb-arrow {
  width: 17px; height: 17px; flex: none; border: 0; padding: 0; background: none; color: #606060;
  display: flex; align-items: center; justify-content: center;
}
.sb-arrow.dim { color: #bfbfbf; }
</style>

<style scoped>
.app {
  display: flex; flex-direction: column; height: 100vh; background: #fff; color: #000; overflow: hidden;
  font: 11px/16px "Open Sans", "Noto Sans", sans-serif;
}
button, input, select { font: inherit; color: inherit; border-radius: 0; }
h1, h2, h3, p, ul, dl, dd { margin: 0; padding: 0; font-size: 11px; font-weight: 400; }
i { font-style: normal; }

.titlebar { display: flex; align-items: center; height: 24px; padding-left: 2px; flex: none; }
.titlebar h1 { margin-left: 5px; flex: 1; }
.winbtns { display: flex; align-self: flex-start; padding-right: 2px; }
.winbtns button { width: 46px; height: 20px; border: 0; background: none; padding: 0; display: flex; align-items: center; justify-content: center; }

.menubar { display: flex; height: 19px; padding-left: 1px; border-bottom: 1px solid #dadada; flex: none; }
.menubar button { border: 0; background: none; padding: 0 7px; line-height: 18px; }

.toolbar { display: flex; align-items: center; height: 29px; padding-left: 2px; border-bottom: 1px solid #dadada; flex: none; }
.toolbar.node { height: 31px; }
.tb { box-sizing: border-box; width: 26px; height: 26px; border: 1px solid transparent; background: none; padding: 0; display: flex; align-items: center; justify-content: center; }
.tb.drop { width: 25px; }
.tb.on { background: #cce8ff; border-color: #99d1ff; }
.sep { width: 1px; height: 16px; background: #a0a0a0; margin: 0 6px 0 5px; }
.xy { display: flex; align-items: center; width: 199px; color: #838383; }
.xy label { width: 22px; text-align: center; box-sizing: border-box; padding-right: 4px; }
.xy .spin { width: 55px; height: 20px; }

.combo { display: flex; position: relative; width: 52px; height: 21px; color: #000; }
.combo select { appearance: none; width: 100%; height: 100%; border: 1px solid #a4a4a8; background: #fff; padding: 0 18px 0 3px; margin: 0; }
.combo svg { position: absolute; right: 1px; top: 1px; background: #e1e1e1; border-left: 1px solid #a4a4a8; pointer-events: none; }
.combo.unit { width: 43px; margin-left: 1px; }

.work { flex: 1; min-height: 0; display: flex; background: #f0f0f0; }
.toolbox { width: 34px; background: #fff; padding-top: 2px; box-sizing: border-box; display: flex; flex-direction: column; flex: none; }
.toolbox button { box-sizing: border-box; width: 30px; height: 30px; margin-left: 2px; padding: 0; border: 1px solid transparent; background: none; display: flex; align-items: center; justify-content: center; flex: none; }
.toolbox button.on { background: #cce8ff; border-color: #99d1ff; }

.view { flex: 1; min-width: 0; display: grid; grid-template: 15px minmax(0, 1fr) 17px / 17px minmax(0, 1fr) 16px; margin-right: 6px; }
.view svg { display: block; }
.corner { display: flex; align-items: center; justify-content: center; }
.hruler, .vruler { background: #f0f0f0; }
.hruler text, .vruler text { font-size: 8px; fill: #444; }
.canvas { background: #fff; }
.vscroll, .dscroll { display: flex; flex-direction: column; align-items: center; }
.vscroll .thumb, .dscroll .thumb { width: 15px; }
.hscroll, .pscroll { display: flex; align-items: center; }
.hscroll .thumb { height: 15px; }
.thumb { background: #cdcdcd; }
.g163 { flex: 163; } .g478 { flex: 478; } .g135 { flex: 135; } .g555 { flex: 555; } .g253 { flex: 253; }
.g591 { flex: 591; } .g1286 { flex: 1286; }

.dock {
  box-sizing: border-box; width: 381px; flex: none; margin-top: 1px; border-top: 1px solid #000; border-left: 2px solid #111;
  border-right: 1px solid #fff; overflow: hidden; display: flex; flex-direction: column;
}
.dscroll { width: 20px; flex: none; }
.dhead { display: flex; align-items: center; height: 22px; flex: none; border-bottom: 1px solid #a0a0a0; margin-right: 3px; padding-right: 2px; }
.dhead h2 { flex: 1; margin-left: 1px; }
.dhead button { border: 0; background: none; padding: 0; width: 12px; height: 12px; margin-left: 10px; }
.history { list-style: none; background: #fff; margin: 4px 7px 0 5px; padding-bottom: 8px; }
.history li { display: flex; align-items: center; height: 23px; }
.history li.sel { background: #f0f0f0; }
.history b { width: 51px; text-align: right; margin-right: 8px; }
.history svg { margin-right: 8px; }
.tabs { display: flex; gap: 4px; margin: 8px 0 9px 3px; flex: none; }
.tabs button { box-sizing: border-box; height: 19px; width: 173px; display: flex; align-items: center; border: 1px solid #adadad; background: #e1e1e1; padding: 0 6px 0 1px; gap: 4px; white-space: nowrap; }
.tabs button svg:last-child { margin-left: auto; }
.tabs button.on { background: #cce4f7; border-color: #005499; width: 187px; }
.tabs.last { border-top: 1px solid #fff; margin: 8px 3px 0 0; padding: 3px 0 0 3px; }
.tabs.last button { flex: 1; }

.export { padding: 7px 0 0 8px; width: 369px; box-sizing: border-box; }
.export h3 { font-weight: 700; height: 16px; }
.export button { border: 1px solid #adadad; background: #e1e1e1; padding: 0; }
.export button.on { background: #cce4f7; border-color: #005499; }
.areas { display: grid; grid-template-columns: repeat(4, 1fr); gap: 2px; margin: 6px 0 0 1px; }
.areas button { height: 23px; }
.coords { display: grid; grid-template-columns: 69px 61px 72px 61px; gap: 4px 26px; margin: 7px 0 0 1px; text-align: center; align-items: center; }
.units { display: flex; align-items: center; justify-content: flex-end; gap: 4px; margin: 3px -1px 6px 0; }
.size { display: grid; grid-template-columns: 61px 61px 101px 61px 1fr; height: 23px; align-items: center; text-align: center; margin: 4px 0 9px; }
.size label:first-child { margin-right: -18px; padding-right: 18px; }
.size { grid-template-columns: 79px 61px 101px 61px 1fr; }
.size label:first-child { margin-right: 0; }
.size .dpi { text-align: right; padding-right: 12px; }
.dim { color: #838383; }
.file { display: flex; align-items: center; margin-top: 3px; height: 38px; gap: 10px; }
.file input { box-sizing: border-box; width: 258px; height: 23px; border: 1px solid #abadb3; padding: 0 2px 0 1px; }
.file button { width: 89px; height: 38px; display: flex; align-items: center; justify-content: center; gap: 3px; white-space: nowrap; }
.tick { display: flex; align-items: center; gap: 6px; height: 13px; margin: 18px 0 0 -1px; }
.tick + .tick { margin-top: 28px; }
.tick input { appearance: none; box-sizing: border-box; width: 13px; height: 13px; margin: 0; border: 1px solid #333; background: #fff; }
.tick input:disabled { border-color: #ccc; }
.progress { height: 40px; border: 1px solid #bcbcbc; background: #e6e6e6; margin: 14px -4px 0 -3px; }
.finish { display: flex; align-items: center; justify-content: space-between; margin-top: 4px; height: 28px; }
.finish .tick { margin: 0 0 0 2px; }
.finish button { width: 64px; height: 28px; display: flex; align-items: center; justify-content: center; gap: 4px; }

.palette { display: flex; height: 14px; padding: 0 2px; border-top: 1px solid #111; border-bottom: 1px solid #fff; background: #f0f0f0; flex: none; margin-bottom: 1px; gap: 1px; }
.swatches { display: flex; overflow: hidden; width: 1907px; }
.swatches button { width: 14px; height: 14px; flex: none; border: 0; padding: 0; }
.swatches .none { background: #fff; }
.swatches svg { display: block; }
.pscroll { height: 16px; border-top: 1px solid #fff; background: #f0f0f0; flex: none; padding-right: 9px; }
.pscroll .thumb { height: 14px; }

.status { display: flex; align-items: center; height: 28px; background: #f0f0f0; flex: none; box-sizing: border-box; }
.fs { display: grid; grid-template: 14px 14px / 40px 80px; line-height: 14px; padding-left: 2px; }
.black { background: #000; display: flex; justify-content: flex-end; }
.black em { font-style: normal; background: #f0f0f0; width: 24px; text-align: right; }
.op { margin: 0 3px 0 4px; }
.status .spin { width: 47px; height: 21px; }
.vline { width: 1px; height: 28px; background: #a0a0a0; margin: 0 5px 0 3px; }
.status .icon { margin-right: 6px; }
.status .icon + .icon { margin-right: 3px; }
.combo.layer { width: 68px; height: 28px; font-weight: 700; font-size: 10px; }
.status p { margin-left: 2px; flex: 1; }
.pos { display: grid; grid-template: 14px 14px / 11px 51px; line-height: 14px; border-left: 1px solid #a0a0a0; padding-left: 2px; }
.pos dd { font: 12px/14px "Liberation Mono", monospace; text-align: right; }
.zl { margin: 0 3px 0 8px; }
.status .zoom { width: 56px; }
.status .zoom :deep(input) { padding-left: 9px; }

.taskbar { display: flex; height: 40px; background: #02040a; color: #fff; flex: none; }
.taskbar button { width: 48px; border: 0; padding: 0; background: none; display: flex; align-items: center; justify-content: center; }
.apps { display: flex; margin-left: 2px; flex: 1; }
.apps button { width: 49px; }
.apps .run { border: solid transparent; border-width: 0 4px; background: linear-gradient(#76b9ed, #76b9ed) bottom / 100% 2px no-repeat; background-clip: padding-box; }
.apps .active { background: #333438; box-shadow: inset 0 -2px #76b9ed; }
.tray { display: flex; align-items: center; gap: 8px; }
.tray .ppl { margin-right: 11px; }
.lang { margin-left: 2px; }
.tray time { width: 66px; margin-right: 4px; text-align: center; line-height: 18px; }
.tray .desk { width: 1px; height: 40px; background: #44464c; margin: 0 4px 0 11px; }
</style>
